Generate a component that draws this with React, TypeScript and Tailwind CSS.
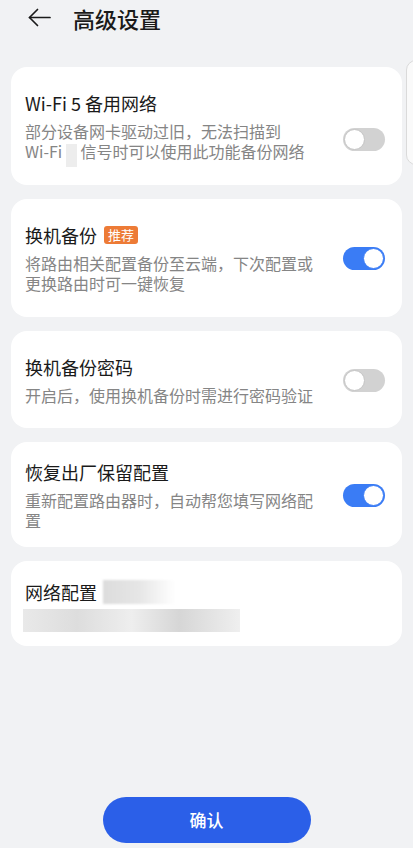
import React from "react";

interface SettingCardProps {
    title: string;
    badge?: string;
    lines: React.ReactNode[];
    on: boolean;
    cardClass?: string;
    toggleClass?: string;
}

const Toggle: React.FC<{ on: boolean; className?: string }> = ({ on, className }) => (
    <div
        className={`relative w-[42px] h-[23px] rounded-full shrink-0 ${
            on ? "bg-[#3a7cf5]" : "bg-[#d2d2d2]"
        } ${className ?? ""}`}
    >
        <div
            className={`absolute top-[1px] w-[21px] h-[21px] rounded-full bg-white ${
                on ? "right-[1px] border border-[#3a7cf5]" : "left-[1px] border border-[#c4c4c4]"
            }`}
        />
    </div>
);

const SettingCard: React.FC<SettingCardProps> = ({ title, badge, lines, on, cardClass, toggleClass }) => (
    <div className={`bg-white rounded-[16px] pl-[14px] pr-[17px] flex items-center ${cardClass ?? "pt-6 pb-6"}`}>
        <div className="flex-1 min-w-0">
            <div className="flex items-center h-6">
                <span className="text-[18px] leading-6 text-[#1a1a1a]">{title}</span>
                {badge && (
                    <span className="ml-[7px] h-[18px] px-[4px] rounded-[3px] bg-[#ed7b36] text-white text-[13px] leading-[18px]">
                        {badge}
                    </span>
                )}
            </div>
            <p className="mt-[6px] text-[16px] leading-[20px] text-[#858585] whitespace-nowrap">
                {lines.map((line, i) => (
                    <React.Fragment key={i}>
                        {i > 0 && <br />}
                        {line}
                    </React.Fragment>
                ))}
            </p>
        </div>
        <Toggle on={on} className={toggleClass} />
    </div>
);

export default function App() {
    return (
        <div
            className="relative min-h-[848px] w-[413px] bg-[#f1f2f4] flex flex-col overflow-hidden"
            style={{ fontFamily: '"Noto Sans CJK SC", "Noto Sans", sans-serif' }}
        >
            {/* Header */}
            <div className="h-[35px] flex items-center pl-[28px]">
                <svg width="23" height="19" viewBox="0 0 23 19" fill="none" stroke="#1a1a1a" strokeWidth="1.7" strokeLinecap="round" strokeLinejoin="round">
                    <path d="M22 9.5H1.5" />
                    <path d="M9.5 1.5L1.5 9.5L9.5 17.5" />
                </svg>
                <h1 className="ml-[22px] text-[22px] leading-[30px] font-medium text-[#1a1a1a]">高级设置</h1>
            </div>

            {/* Peeking panel on the right edge */}
            <div className="absolute right-[-10px] top-[60px] w-[17px] h-[105px] rounded-l-[10px] border border-[#dadada] bg-[#fafafa]" />

            <div className="mt-[32px] mx-[11px] flex flex-col gap-[14px]">
                <SettingCard
                    title="Wi-Fi 5 备用网络"
                    on={false}
                    toggleClass="mt-[26px]"
                    lines={[
                        "部分设备网卡驱动过旧，无法扫描到",
                        <>
                            Wi-Fi{" "}
                            <span className="relative inline-block w-[11px] h-[1px]">
                                <span className="absolute left-0 top-[-13px] w-[11px] h-[23px] bg-[#ededed]" />
                            </span>{" "}
                            信号时可以使用此功能备份网络
                        </>,
                    ]}
                />
                <SettingCard
                    title="换机备份"
                    badge="推荐"
                    on={true}
                    lines={["将路由相关配置备份至云端，下次配置或", "更换路由时可一键恢复"]}
                />
                <SettingCard
                    title="换机备份密码"
                    on={false}
                    cardClass="pt-6 pb-[23px]"
                    lines={["开启后，使用换机备份时需进行密码验证"]}
                />
                <SettingCard
                    title="恢复出厂保留配置"
                    on={true}
                    cardClass="pt-[18px] pb-[17px]"
                    lines={["重新配置路由器时，自动帮您填写网络配", "置"]}
                />

                {/* Network config */}
                <div className="bg-white rounded-[16px] pl-[14px] pr-[17px] pt-[19px] pb-[14px]">
                    <div className="flex items-center h-6">
                        <span className="text-[18px] leading-6 text-[#1a1a1a]">网络配置</span>
                        <div className="ml-[6px] w-[72px] h-[24px] bg-[linear-gradient(90deg,#dcdcdc,#e6e6e6_50%,#ffffff)] blur-[1px]" />
                    </div>
                    <div className="mt-[5px] -ml-[2px] w-[217px] h-[23px] bg-[linear-gradient(90deg,#e9e9e9,#dddddd_25%,#eeeeee_50%,#d6d6d6_72%,#efefef)]" />
                </div>
            </div>

            <div className="mt-auto mb-[5px] flex justify-center">
                <button className="w-[208px] h-[46px] rounded-full bg-[#2b5fe8] text-white text-[17px] font-medium">
                    确认
                </button>
            </div>
        </div>
    );
}
